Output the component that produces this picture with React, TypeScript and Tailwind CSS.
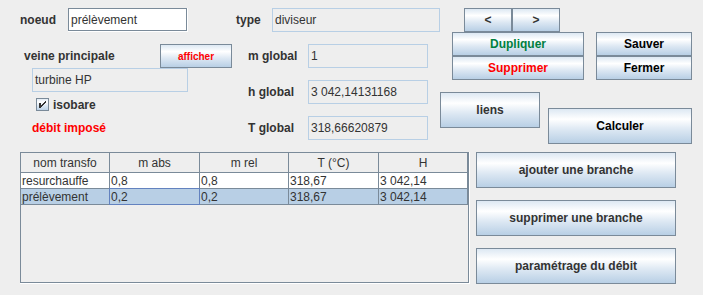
import React from "react";

const BTN =
  "box-border border border-[#7a8a99] bg-[linear-gradient(to_bottom,#dde8f3_0%,#ffffff_30%,#dde8f3_60%,#b8cfe5_100%)] flex items-center justify-center font-bold whitespace-nowrap";

function Btn({ className, children }: { className: string; children: React.ReactNode }) {
  return <div className={`${BTN} ${className}`}>{children}</div>;
}

function EditField({ className, children }: { className: string; children: React.ReactNode }) {
  return (
    <div className={`h-[24px] border-r border-b border-white flex ${className}`}>
      <div className="flex-1 border border-[#7a8a99] bg-white flex items-center pl-[2px] whitespace-nowrap">
        {children}
      </div>
    </div>
  );
}

function ROField({ className, children }: { className: string; children: React.ReactNode }) {
  return (
    <div className={`h-[24px] border border-[#b8cfe5] flex items-center pl-[2px] whitespace-nowrap ${className}`}>
      {children}
    </div>
  );
}

const COLS = ["w-[89px]", "w-[90px]", "w-[89px]", "w-[90px]", "w-[89px]"];
const HEAD = ["nom transfo", "m abs", "m rel", "T (°C)", "H"];
const ROWS = [
  ["resurchauffe", "0,8", "0,8", "318,67", "3 042,14"],
  ["prélèvement", "0,2", "0,2", "318,67", "3 042,14"],
];

function CheckBox() {
  return (
    <svg width="13" height="13" viewBox="0 0 13 13" shapeRendering="crispEdges">
      <defs>
        <linearGradient id="cbg" x1="0" y1="0" x2="0" y2="1">
          <stop offset="0" stopColor="#dde8f3" />
          <stop offset="0.3" stopColor="#ffffff" />
          <stop offset="0.6" stopColor="#dde8f3" />
          <stop offset="1" stopColor="#b8cfe5" />
        </linearGradient>
      </defs>
      <rect x="0.5" y="0.5" width="12" height="12" fill="url(#cbg)" stroke="#7a8a99" />
      <rect x="3" y="5" width="2" height="5" fill="#333333" />
      <path d="M5 7 L6 7 L6 6 L7 6 L7 5 L8 5 L8 4 L9 4 L9 3 L10 3 L10 5 L9 5 L9 6 L8 6 L8 7 L7 7 L7 8 L6 8 L6 9 L5 9 Z" fill="#333333" />
    </svg>
  );
}

export default function App() {
  return (
    <div className="w-[703px] h-[295px] bg-[#eeeeee] font-['Liberation_Sans',Arial,sans-serif] text-[12px] text-[#333333] flex flex-col overflow-hidden">
      {/* top section */}
      <div className="flex h-[152px]">
        {/* column A */}
        <div className="w-[234px] flex flex-col pt-[8px]">
          <div className="flex items-center h-[24px]">
            <span className="ml-[20px] w-[48px] font-bold">noeud</span>
            <EditField className="w-[120px]">prélèvement</EditField>
          </div>
          <div className="flex items-center h-[24px] mt-[12px]">
            <span className="ml-[24px] w-[136px] font-bold">veine principale</span>
            <Btn className="w-[72px] h-[24px] text-[10px] text-[#ff0000]">afficher</Btn>
          </div>
          <ROField className="ml-[32px] w-[156px]">turbine HP</ROField>
          <div className="flex items-center h-[13px] mt-[6px] ml-[36px] gap-[4px]">
            <CheckBox />
            <span className="font-bold">isobare</span>
          </div>
          <div className="ml-[32px] mt-[10px] leading-[14px] font-bold text-[#ff0000]">débit imposé</div>
        </div>

        {/* column B */}
        <div className="w-[206px] flex flex-col pt-[8px]">
          <div className="flex items-center h-[24px]">
            <span className="ml-[2px] w-[36px] font-bold">type</span>
            <ROField className="w-[168px]">diviseur</ROField>
          </div>
          <div className="flex items-center h-[24px] mt-[12px]">
            <span className="ml-[14px] w-[60px] font-bold">m global</span>
            <ROField className="w-[120px]">1</ROField>
          </div>
          <div className="flex items-center h-[24px] mt-[12px]">
            <span className="ml-[14px] w-[60px] font-bold">h global</span>
            <ROField className="w-[120px]">3 042,14131168</ROField>
          </div>
          <div className="flex items-center h-[24px] mt-[12px]">
            <span className="ml-[14px] w-[60px] font-bold">T global</span>
            <ROField className="w-[120px]">318,66620879</ROField>
          </div>
        </div>

        {/* column C */}
        <div className="flex-1 flex flex-col pt-[8px]">
          <div className="flex ml-[24px]">
            <Btn className="w-[48px] h-[24px]">&lt;</Btn>
            <Btn className="w-[48px] h-[24px]">&gt;</Btn>
          </div>
          <div className="flex">
            <div className="ml-[12px] w-[132px] flex flex-col">
              <Btn className="h-[24px] text-[#008040]">Dupliquer</Btn>
              <Btn className="h-[24px] text-[#ff0000]">Supprimer</Btn>
            </div>
            <div className="ml-[12px] w-[96px] flex flex-col">
              <Btn className="h-[24px] text-black">Sauver</Btn>
              <Btn className="h-[24px] text-black">Fermer</Btn>
            </div>
          </div>
          <div className="flex items-start mt-[12px]">
            <Btn className="w-[100px] h-[36px]">liens</Btn>
            <Btn className="ml-[8px] mt-[16px] w-[144px] h-[36px] text-black">Calculer</Btn>
          </div>
        </div>
      </div>

      {/* bottom section */}
      <div className="flex">
        <div className="ml-[20px] w-[450px] h-[132px] border-r border-b border-white flex">
          <div className="flex-1 border border-[#7a8a99] flex flex-col">
            <div className="flex h-[20px]">
              {HEAD.map((h, i) => (
                <div
                  key={i}
                  className={`${COLS[i]} border-r border-b border-[#7a8a99] flex items-center justify-center whitespace-nowrap`}
                >
                  {h}
                </div>
              ))}
            </div>
            {ROWS.map((r, ri) => (
              <div key={ri} className={`flex h-[16px] ${ri === 1 ? "bg-[#b8cfe5]" : "bg-white"}`}>
                {r.map((c, ci) => (
                  <div
                    key={ci}
                    className={`${COLS[ci]} relative border-r border-b border-[#7a8a99] flex items-center pl-px whitespace-nowrap overflow-visible leading-none`}
                  >
                    {c}
                    {ri === 1 && ci === 1 ? (
                      <div className="absolute -inset-px border border-[#6382bf]" />
                    ) : null}
                  </div>
                ))}
              </div>
            ))}
          </div>
        </div>
        <div className="ml-[6px] w-[200px] flex flex-col gap-[12px]">
          <Btn className="h-[36px]">ajouter une branche</Btn>
          <Btn className="h-[36px]">supprimer une branche</Btn>
          <Btn className="h-[36px]">paramétrage du débit</Btn>
        </div>
      </div>
    </div>
  );
}
